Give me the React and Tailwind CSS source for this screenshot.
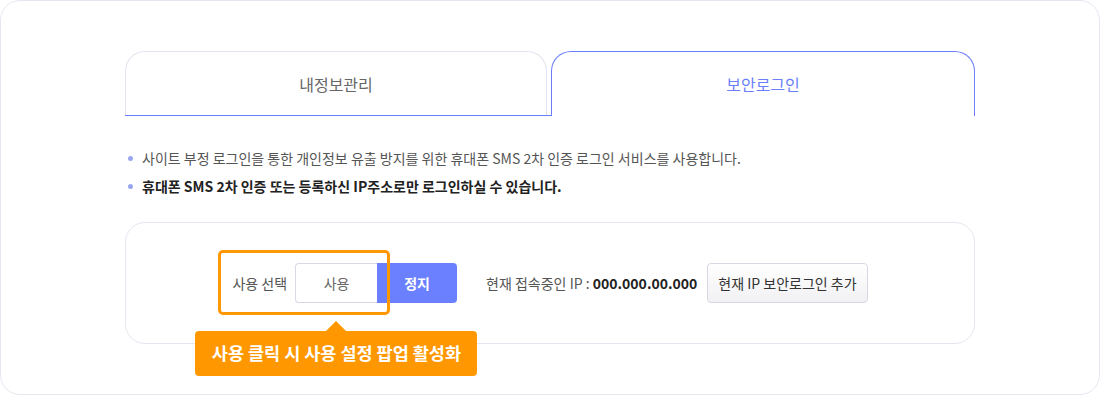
const FONT = "font-['Noto_Sans_CJK_KR','Noto_Sans',sans-serif]"

function Tabs() {
  return (
    <div className="flex">
      <div className="flex-1 border-b border-[#6b7ffb] pr-1">
        <div className="h-[64px] rounded-t-[20px] border border-b-0 border-[#e4e4f0] flex items-center justify-center text-[16px] text-[#666]">
          내정보관리
        </div>
      </div>
      <div className="flex-1 h-[65px] rounded-t-[20px] border border-b-0 border-[#6b7ffb] flex items-center justify-center text-[16px] text-[#6b7ffb] pb-px">
        보안로그인
      </div>
    </div>
  )
}

function Notes() {
  const items = [
    { text: '사이트 부정 로그인을 통한 개인정보 유출 방지를 위한 휴대폰 SMS 2차 인증 로그인 서비스를 사용합니다.', strong: false },
    { text: '휴대폰 SMS 2차 인증 또는 등록하신 IP주소로만 로그인하실 수 있습니다.', strong: true },
  ]
  return (
    <ul className="mt-[28px]">
      {items.map((it, i) => (
        <li key={i} className="flex items-center h-[28px] pl-[3px]">
          <span className="w-[5px] h-[5px] rounded-full bg-[#9aa6ef] mr-[9px]" />
          <span className={it.strong ? 'text-[14px] font-bold text-[#222]' : 'text-[14px] text-[#555]'}>
            {it.text}
          </span>
        </li>
      ))}
    </ul>
  )
}

export default function App() {
  return (
    <div className={`w-[1100px] h-[395px] bg-white ${FONT}`}>
      <div className="w-[1100px] h-[395px] rounded-[20px] border border-[#e6e6f0] px-[124px] pt-[50px]">
        <Tabs />
        <Notes />

        {/* security login box */}
        <div className="mt-[22px] h-[122px] rounded-[20px] border border-[#e6e6f0] flex items-center justify-center">
          <div className="relative flex items-center">
            <span className="text-[14px] text-[#555] mr-[8px]">사용 선택</span>
            <button className="w-[82px] h-[40px] border border-[#d8d8e8] border-r-0 rounded-l-[4px] bg-white text-[14px] text-[#666]">
              사용
            </button>
            <button className="w-[80px] h-[40px] rounded-r-[4px] bg-[#6b80ff] text-[14px] font-bold text-white">
              정지
            </button>

            {/* highlight overlay */}
            <div className="absolute left-[-14px] top-[-13px] w-[172px] h-[65px] border-[3px] border-[#ff9800] rounded-[5px] pointer-events-none" />

            {/* tooltip */}
            <div className="absolute left-[-37px] top-[68px] w-[282px] h-[45px] rounded-[4px] bg-[#ff9800] flex items-center justify-center">
              <span className="absolute left-1/2 -translate-x-1/2 top-[-10px] w-0 h-0 border-l-[10px] border-r-[10px] border-b-[10px] border-l-transparent border-r-transparent border-b-[#ff9800]" />
              <span className="text-[17.5px] font-bold text-white whitespace-nowrap">사용 클릭 시 사용 설정 팝업 활성화</span>
            </div>
          </div>

          <div className="flex items-center ml-[29px]">
            <span className="text-[14px] text-[#555]">
              현재 접속중인 IP : <span className="font-semibold text-[#222]">000.000.00.000</span>
            </span>
            <button className="ml-[10px] h-[40px] px-[10px] rounded-[4px] border border-[#d8d8e4] bg-gradient-to-b from-white to-[#f1f1f4] text-[14px] text-[#333]">
              현재 IP 보안로그인 추가
            </button>
          </div>
        </div>
      </div>
    </div>
  )
}
